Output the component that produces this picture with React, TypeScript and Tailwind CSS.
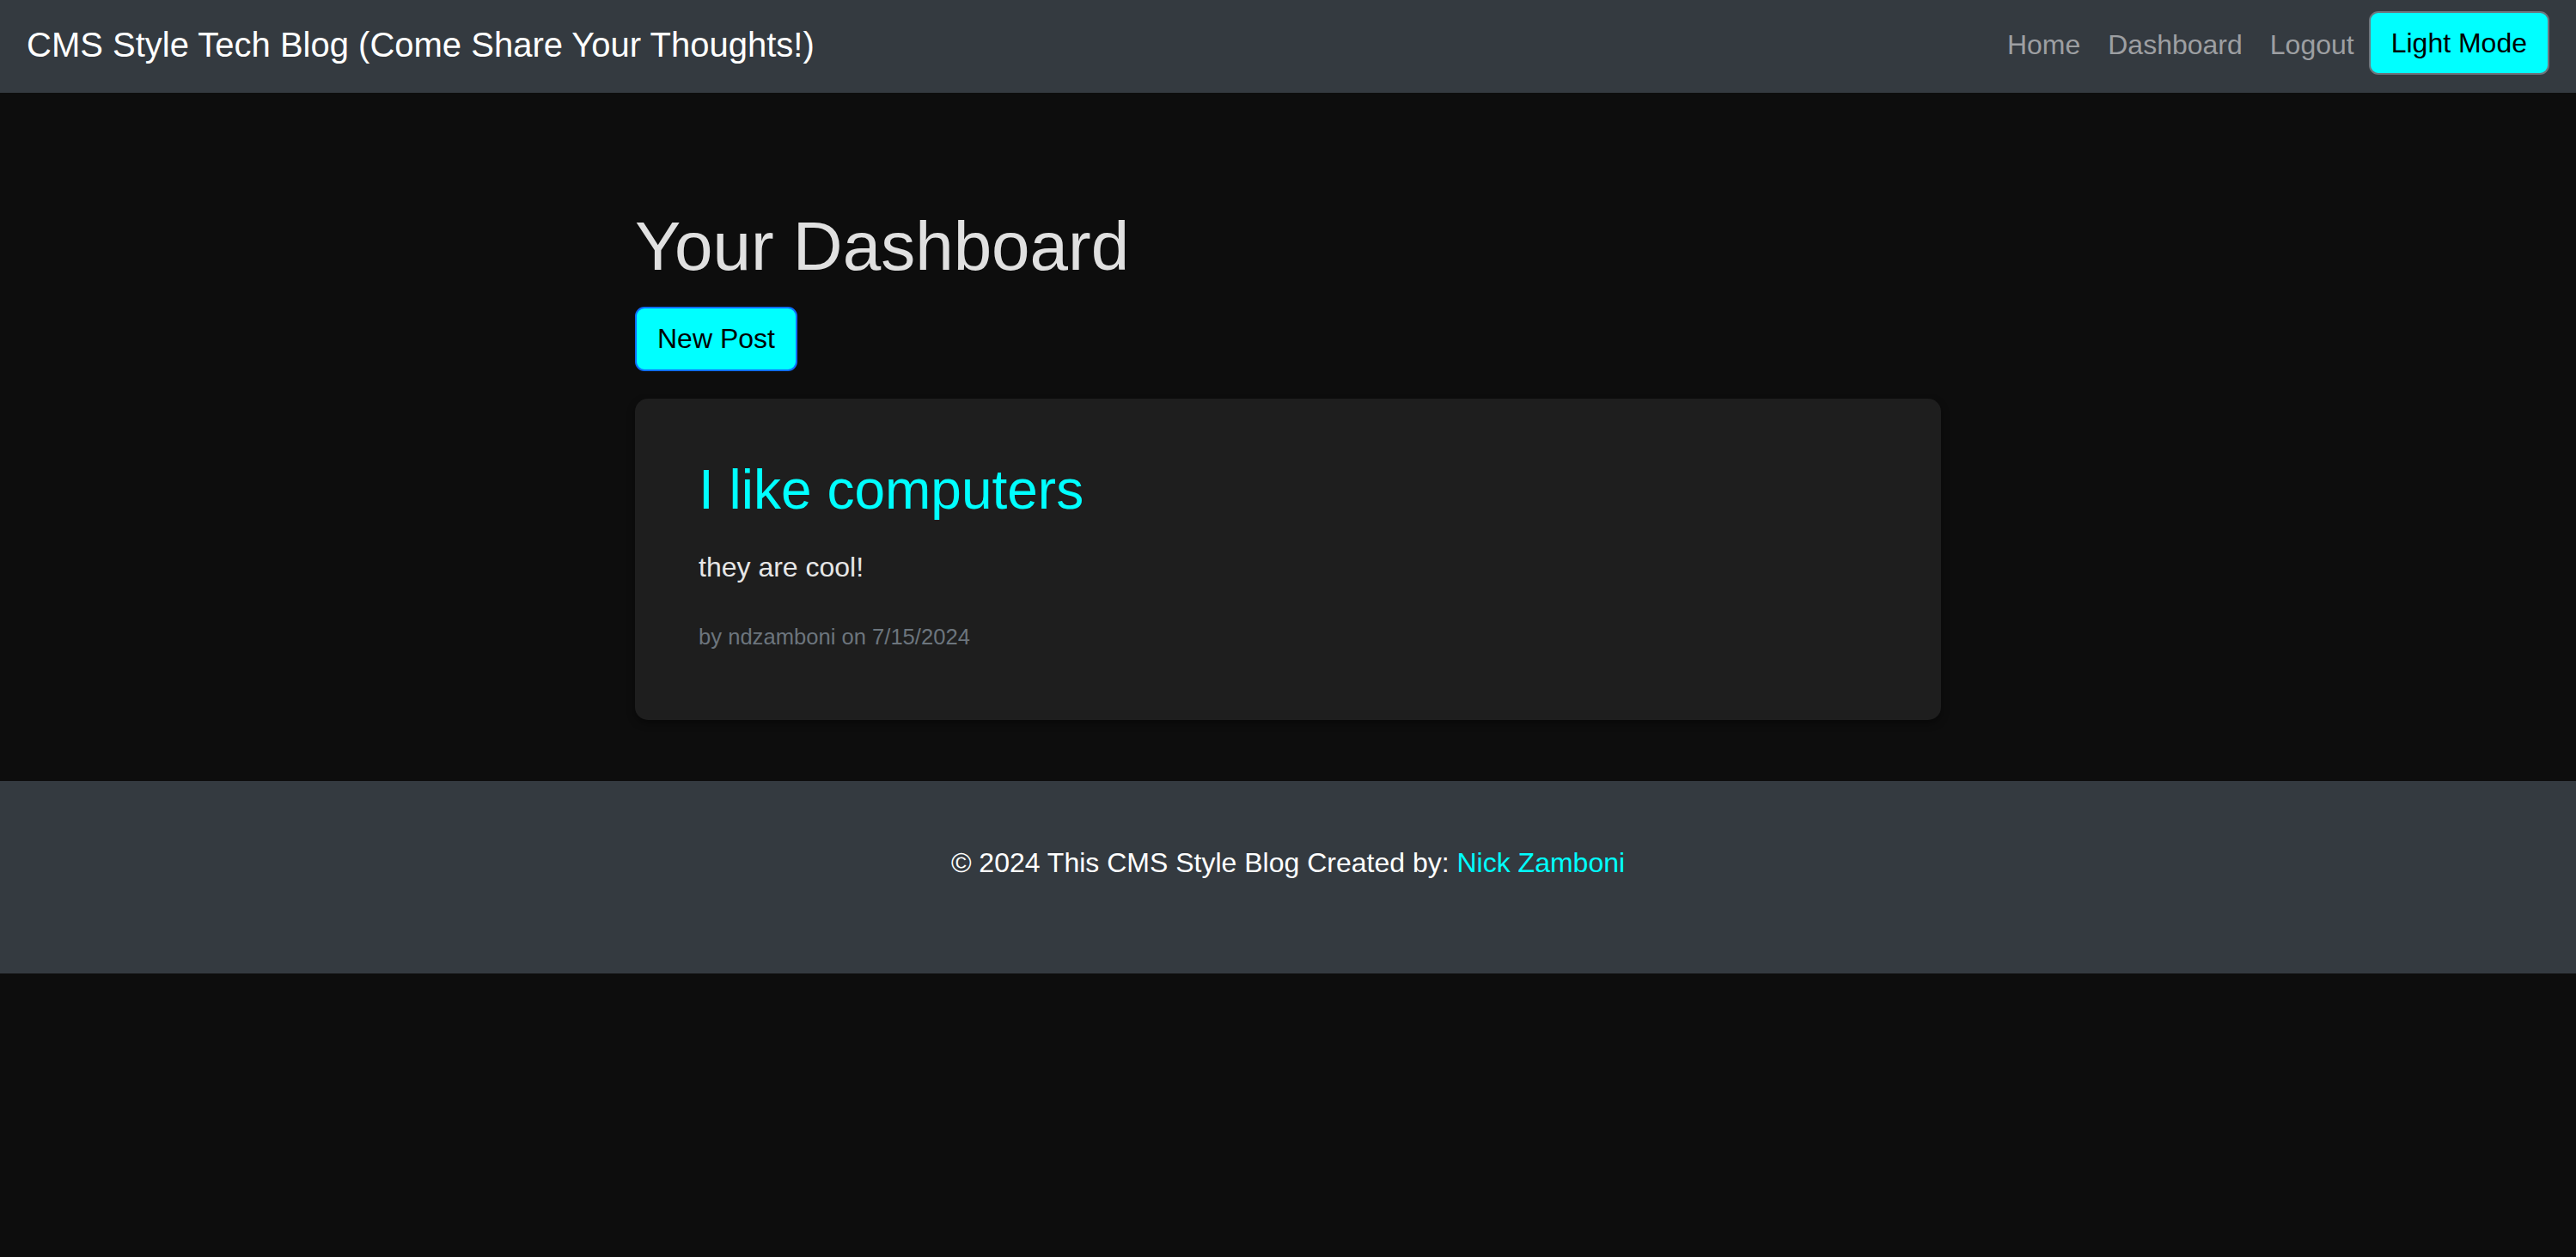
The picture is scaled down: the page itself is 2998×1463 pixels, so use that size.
export default function App() {
  const links = ["Home", "Dashboard", "Logout"];

  return (
    <div className="min-h-screen bg-[#0d0d0d] font-['Liberation_Sans',Arial,sans-serif]">
      <nav className="h-[108px] bg-[#343a40] flex items-center justify-between px-[31px] pb-[4px]">
        <a href="#" className="text-[40px] leading-[58px] text-white">
          CMS Style Tech Blog (Come Share Your Thoughts!)
        </a>
        <div className="flex items-center">
          {links.map((link) => (
            <a
              key={link}
              href="#"
              className="px-[16px] text-[32px] leading-[46.5px] text-[#9d9fa2]"
            >
              {link}
            </a>
          ))}
          <button className="ml-[1px] mb-[4px] h-[74px] px-[24px] text-[32px] leading-[46.5px] text-black bg-[#00ffff] border-2 border-[#6c757d] rounded-[11px]">
            Light Mode
          </button>
        </div>
      </nav>

      <main className="w-[1520px] mx-auto pt-[131px]">
        <h1 className="text-[80px] leading-[95px] text-[#e0e0e0] mb-[23px]">
          Your Dashboard
        </h1>
        <button className="h-[75px] px-[24px] text-[32px] leading-[46.5px] text-black bg-[#00ffff] border-2 border-[#0d6efd] rounded-[11px]">
          New Post
        </button>

        <div className="mt-[32px] bg-[#1e1e1e] rounded-[15px] shadow-[0_4px_10px_rgba(0,0,0,0.4)] px-[74px] pt-[68px] pb-[74px]">
          <h2 className="text-[64px] leading-[77px] text-[#00ffff] mb-[28px]">
            I like computers
          </h2>
          <p className="text-[32px] leading-[46.5px] text-[#e6e6e6] mb-[32px]">
            they are cool!
          </p>
          <p className="text-[32px] leading-[46.5px]">
            <small className="text-[25.6px] text-[#6c757d]">
              by ndzamboni on 7/15/2024
            </small>
          </p>
        </div>
      </main>

      <footer className="mt-[71px] bg-[#343a40] pt-[72px] pb-[105px] text-center">
        <p className="text-[32px] leading-[46.5px] text-white">
          © 2024 This CMS Style Blog Created by:{" "}
          <a href="#" className="text-[#00ffff]">
            Nick Zamboni
          </a>
        </p>
      </footer>
    </div>
  );
}
